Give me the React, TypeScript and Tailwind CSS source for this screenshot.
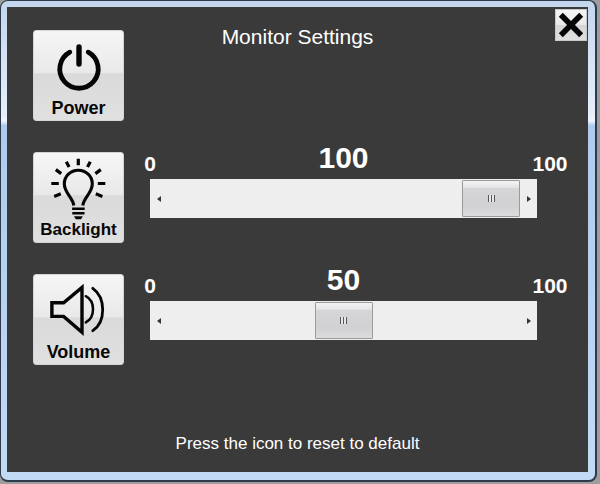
import React, { useState } from "react";

const PowerIcon = () => (
  <svg viewBox="1 1 89 70" className="block h-[70px] w-[89px] shrink-0" fill="none" stroke="#050505" strokeLinecap="round">
    <path d="M36.8 22.2A19.2 19.2 0 1 0 55.2 22.2" strokeWidth="4.8" />
    <path d="M46 17v17" strokeWidth="5.4" />
  </svg>
);

const BulbIcon = () => (
  <svg viewBox="1 1 89 70" className="block h-[70px] w-[89px] shrink-0" fill="none" stroke="#050505">
    {/* Glass */}
    <path
      d="M40.8 53.5C39.8 45.5 31.3 41 31.3 31.8a14 13.6 0 0 1 28 0C59.3 41 50.8 45.5 49.8 53.5"
      strokeWidth="3.1"
    />
    {/* Socket */}
    <path d="M39.1 56.8h12.6M39.3 61.3h12.2" strokeWidth="2.4" />
    <path d="M41 64.3h8.8L48 67.2h-5.2z" fill="#050505" stroke="none" />
    {/* Rays */}
    <path
      d="M45.3 6.7v6.5M33.3 9.8l2.8 5.2M57.3 9.8l-2.8 5.2M22.8 17.6l5.4 4M67.8 17.6l-5.4 4M18.3 31.5h7.5M72.3 31.5h-7.5M21.2 44.4l6.6-2.6M69.4 44.4l-6.6-2.6"
      strokeWidth="3.2"
    />
  </svg>
);

const SpeakerIcon = () => (
  <svg viewBox="1 1 89 70" className="block h-[70px] w-[89px] shrink-0" fill="none" stroke="#050505">
    <path d="M18.9 28.8v13.6h11.7L49 58.3V13.4L30.6 28.8z" strokeWidth="3.4" />
    <path d="M52.8 22.2c9.6 5 9.6 21.2 0 26.2" strokeWidth="2.5" strokeLinecap="round" />
    <path d="M59.8 14.3c13.2 9.5 13.2 33.4 0 42.4" strokeWidth="2.8" strokeLinecap="round" />
  </svg>
);

function IconButton({
  icon,
  children,
  onClick,
}: {
  icon: React.ReactNode;
  children: React.ReactNode;
  onClick?: () => void;
}) {
  return (
    <button
      type="button"
      onClick={onClick}
      className="flex h-[91px] w-[91px] shrink-0 flex-col items-center rounded-[3px] border border-[#d4d4d4] bg-[linear-gradient(#f6f6f6,#e9e9e9_47%,#dadada_48%,#e0e0e0)] text-lg leading-[14px] font-bold text-[#080808]"
    >
      {icon}
      {children}
    </button>
  );
}

function SettingRow({
  name,
  label,
  icon,
  initial,
}: {
  name: string;
  label: React.ReactNode;
  icon: React.ReactNode;
  initial: number;
}) {
  const [value, setValue] = useState(initial);

  return (
    <div className="flex items-start pr-[19px] pl-[26px]">
      <div className="pt-3">
        <IconButton icon={icon} onClick={() => setValue(initial)}>
          {label}
        </IconButton>
      </div>

      <div className="ml-5 flex-1">
        <div className="grid grid-cols-[12px_1fr_38px] items-end text-center text-[21px] leading-6 font-bold text-white">
          <span>0</span>
          <output htmlFor={name} className="text-3xl leading-9">
            {value}
          </output>
          <span>100</span>
        </div>

        <div className="mt-[3px] mr-8 ml-[6px] flex h-[39px] bg-[#eeeeee]">
          <button
            type="button"
            aria-label="Decrease"
            onClick={() => setValue(Math.max(0, value - 1))}
            className="flex w-[17px] items-center justify-center"
          >
            <svg viewBox="0 0 4 6" className="h-[6px] w-1">
              <path d="M4 0v6L0 3z" fill="#333" />
            </svg>
          </button>
          <input
            id={name}
            type="range"
            min={0}
            max={100}
            value={value}
            aria-label={name}
            onChange={(e) => setValue(Number(e.target.value))}
            className="h-full min-w-0 flex-1 appearance-none bg-transparent [&::-webkit-slider-thumb]:h-[37px] [&::-webkit-slider-thumb]:w-[58px] [&::-webkit-slider-thumb]:appearance-none [&::-webkit-slider-thumb]:rounded-[1px] [&::-webkit-slider-thumb]:border [&::-webkit-slider-thumb]:border-[#999a9c] [&::-webkit-slider-thumb]:bg-[repeating-linear-gradient(90deg,#55575b_0px_1px,#e8e8ea_1px_3px),linear-gradient(#f3f3f4,#e6e6e8_18%,#d6d6d8_20%,#d1d1d4_70%,#dcdcdf)] [&::-webkit-slider-thumb]:bg-[length:7px_7px,100%_100%] [&::-webkit-slider-thumb]:bg-center [&::-webkit-slider-thumb]:bg-no-repeat"
          />
          <button
            type="button"
            aria-label="Increase"
            onClick={() => setValue(Math.min(100, value + 1))}
            className="flex w-[17px] items-center justify-center"
          >
            <svg viewBox="0 0 4 6" className="h-[6px] w-1">
              <path d="M0 0v6l4-3z" fill="#333" />
            </svg>
          </button>
        </div>
      </div>
    </div>
  );
}

export default function App() {
  return (
    <div className="flex min-h-screen bg-[#9d9d9d] pr-[3px] pb-[2px] font-['Liberation_Sans',Arial,sans-serif]">
      {/* Window frame */}
      <div className="flex flex-1 rounded-lg border-t border-r-2 border-b-2 border-l border-[#2c3a4b] bg-[linear-gradient(#c3d6ee,#e6eff9_24%,#f2f7fc_25%,#aecbee_26%,#c3daf4)] pt-[6px] pr-[7px] pb-2 pl-[6px]">
        <main className="flex flex-1 flex-col gap-[19px] bg-[#3a3a3a]">
          <header className="grid grid-cols-[117px_1fr_117px] items-start">
            <div className="pt-[23px] pl-[26px]">
              <IconButton icon={<PowerIcon />}>Power</IconButton>
            </div>
            <h1 className="pt-[18px] text-center text-[21px] leading-6 text-white">
              Monitor Settings
            </h1>
            <div className="flex justify-end pt-[2px] pr-px">
              <button
                type="button"
                aria-label="Close"
                className="flex h-8 w-8 items-center justify-center border border-[#c9c9c9] bg-[linear-gradient(#f6f6f6,#e9e9e9_49%,#d6d6d6_50%,#dedede)]"
              >
                <svg viewBox="0 0 26 26" className="h-[26px] w-[26px]">
                  <path d="M2.8 2.8l20.4 20.4M23.2 2.8L2.8 23.2" stroke="#050505" strokeWidth="5.6" />
                </svg>
              </button>
            </div>
          </header>

          <SettingRow
            name="backlight"
            label={<span className="text-[17px]">Backlight</span>}
            icon={<BulbIcon />}
            initial={100}
          />
          <SettingRow name="volume" label="Volume" icon={<SpeakerIcon />} initial={50} />

          <p className="mt-auto pb-4 text-center text-[17px] leading-6 text-white">
            Press the icon to reset to default
          </p>
        </main>
      </div>
    </div>
  );
}
